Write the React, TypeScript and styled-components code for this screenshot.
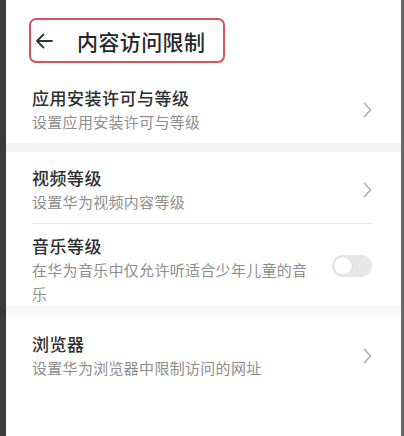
import styled, { createGlobalStyle } from "styled-components";

const GlobalStyle = createGlobalStyle`
  html, body {
    margin: 0;
    padding: 0;
    background: #ffffff;
  }
  body {
    font-family: "Noto Sans CJK SC", "Noto Sans", sans-serif;
  }
`;

const Screen = styled.div`
  width: 404px;
  height: 436px;
  box-sizing: border-box;
  border-left: 6px solid #3b3b3b;
  border-right: 3px solid #6a6a6a;
  background: #ffffff;
  overflow: hidden;
`;

const Header = styled.div`
  padding: 18px 0 0 23px;
`;

const TitleBox = styled.div`
  width: 196px;
  height: 45px;
  box-sizing: border-box;
  border: 2px solid #d8535d;
  border-radius: 7px;
  display: flex;
  align-items: center;
  padding-left: 4px;
  gap: 24px;
`;

const Title = styled.h1`
  margin: 0;
  font-size: 21px;
  font-weight: 500;
  color: #262626;
  letter-spacing: 0.4px;
`;

const Section = styled.div`
  padding: 0;
`;

const Gap = styled.div<{ $fade?: boolean }>`
  height: ${(p) => (p.$fade ? 13 : 9)}px;
  background: ${(p) =>
    p.$fade ? "linear-gradient(#f4f4f4, #ffffff)" : "#f5f5f5"};
`;

const Row = styled.div<{ $top: number; $bottom: number }>`
  display: flex;
  align-items: center;
  padding: ${(p) => p.$top}px 29px ${(p) => p.$bottom}px 26px;
`;

const Texts = styled.div`
  flex: 1;
  min-width: 0;
`;

const RowTitle = styled.div`
  font-size: 17px;
  line-height: 24px;
  font-weight: 500;
  color: #2e2e2e;
  letter-spacing: 0.5px;
`;

const RowSub = styled.div<{ $wrap?: number }>`
  font-size: 15px;
  line-height: 24px;
  color: #8d8d8d;
  letter-spacing: 0.3px;
  max-width: ${(p) => (p.$wrap ? `${p.$wrap}px` : "none")};
`;

const Divider = styled.div`
  height: 1px;
  margin: 0 28px 0 26px;
  background: #e8e8e8;
`;

const Toggle = styled.div`
  width: 40px;
  height: 22px;
  border-radius: 11px;
  background: #e6e6e6;
  position: relative;
  margin-bottom: 8px;

  &::after {
    content: "";
    position: absolute;
    left: 2px;
    top: 2px;
    width: 18px;
    height: 18px;
    border-radius: 50%;
    background: #ffffff;
    box-shadow: 0 0 1px rgba(0, 0, 0, 0.25);
  }
`;

const BackArrow = () => (
  <svg width="18" height="16" viewBox="0 0 18 16" fill="none">
    <path
      d="M17 8H2M8.5 1.5L2 8l6.5 6.5"
      stroke="#333"
      strokeWidth="1.8"
      strokeLinecap="round"
      strokeLinejoin="round"
    />
  </svg>
);

const Chevron = () => (
  <svg width="9" height="16" viewBox="0 0 9 16" fill="none">
    <path
      d="M1.5 1.5L7.5 8l-6 6.5"
      stroke="#b0b0b0"
      strokeWidth="1.7"
      strokeLinecap="round"
      strokeLinejoin="round"
    />
  </svg>
);

export default function App() {
  return (
    <>
      <GlobalStyle />
      <Screen>
        <Header>
          <TitleBox>
            <BackArrow />
            <Title>内容访问限制</Title>
          </TitleBox>
        </Header>

        <Section>
          <Row $top={23} $bottom={9}>
            <Texts>
              <RowTitle>应用安装许可与等级</RowTitle>
              <RowSub>设置应用安装许可与等级</RowSub>
            </Texts>
            <Chevron />
          </Row>
        </Section>

        <Gap />

        <Section>
          <Row $top={14} $bottom={9}>
            <Texts>
              <RowTitle>视频等级</RowTitle>
              <RowSub>设置华为视频内容等级</RowSub>
            </Texts>
            <Chevron />
          </Row>
          <Divider />
          <Row $top={10} $bottom={0}>
            <Texts>
              <RowTitle>音乐等级</RowTitle>
              <RowSub $wrap={282}>在华为音乐中仅允许听适合少年儿童的音乐</RowSub>
            </Texts>
            <Toggle />
          </Row>
        </Section>

        <Gap $fade />

        <Section>
          <Row $top={13} $bottom={0}>
            <Texts>
              <RowTitle>浏览器</RowTitle>
              <RowSub>设置华为浏览器中限制访问的网址</RowSub>
            </Texts>
            <Chevron />
          </Row>
        </Section>
      </Screen>
    </>
  );
}
